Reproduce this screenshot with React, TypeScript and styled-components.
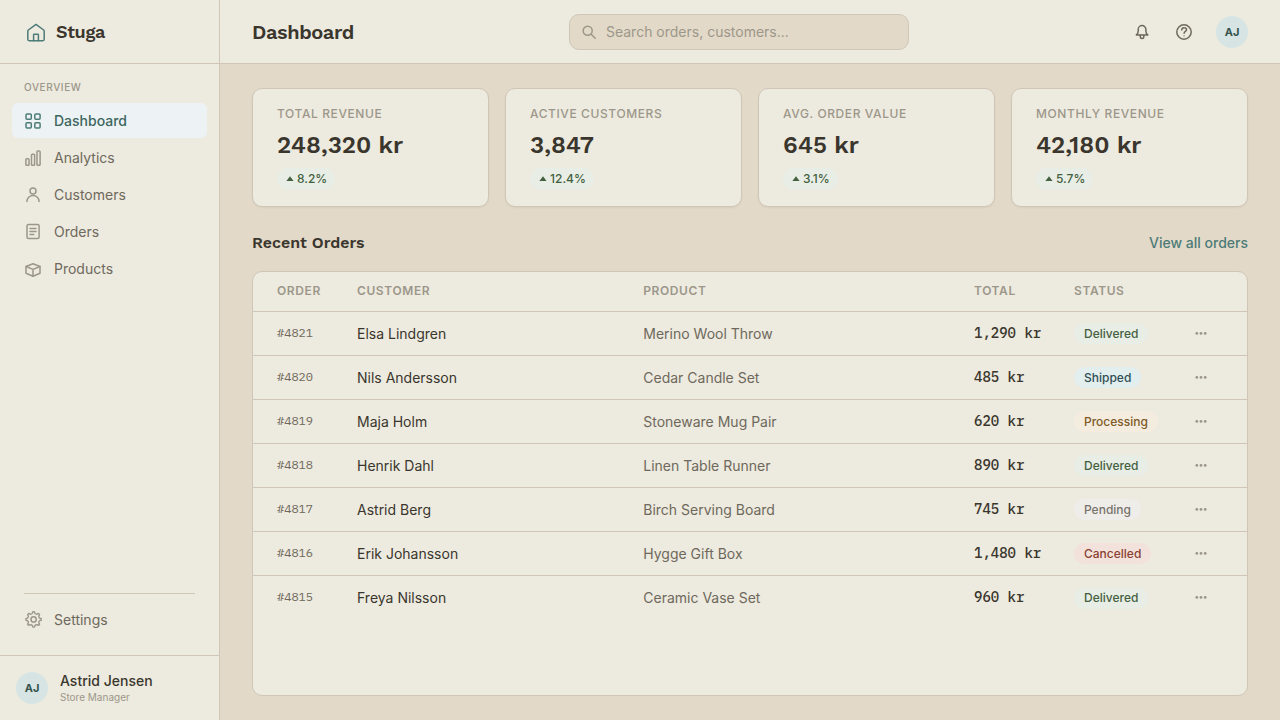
import React from "react";
import styled, { createGlobalStyle, css } from "styled-components";

const color = {
  sand: "#e3d9c8",
  surface: "#edeadf",
  border: "#d0c6b8",
  ink: "#3a362d",
  body: "#6e695c",
  muted: "#9c978a",
  teal: "#4d7c78",
  tealDark: "#3d665f",
  tealTint: "#edf3f4",
  avatar: "#d6e5e4",
};

const font = {
  body: '"Inter", "Liberation Sans", sans-serif',
  heading: '"Work Sans", "Inter", "Liberation Sans", sans-serif',
  mono: '"IBM Plex Mono", "Liberation Mono", monospace',
};

const GlobalStyle = createGlobalStyle`
  *, *::before, *::after { box-sizing: border-box; }
  body {
    margin: 0;
    background: ${color.sand};
    color: ${color.ink};
    font-family: ${font.body};
    font-size: 14px;
    line-height: 20px;
    -webkit-font-smoothing: antialiased;
  }
  button, input { font: inherit; color: inherit; }
  button { border: 0; padding: 0; background: none; cursor: pointer; }
  a { color: inherit; text-decoration: none; }
  h1, h2, p { margin: 0; }
`;

const Shell = styled.div`
  display: grid;
  grid-template-columns: 220px minmax(0, 1fr);
  min-height: 100vh;
`;

/* Sidebar */

const Sidebar = styled.aside`
  display: flex;
  flex-direction: column;
  background: ${color.surface};
  border-right: 1px solid ${color.border};
`;

const Brand = styled.div`
  display: flex;
  align-items: center;
  gap: 8px;
  height: 64px;
  padding: 0 24px;
  border-bottom: 1px solid ${color.border};
  font-family: ${font.heading};
  font-size: 18px;
  font-weight: 600;
  line-height: 21px;
  letter-spacing: -0.02em;
  svg { color: ${color.teal}; }
`;

const Nav = styled.nav`
  display: flex;
  flex: 1;
  flex-direction: column;
  gap: 2px;
  padding: 16px 12px 18px;
`;

const NavLabel = styled.p`
  padding: 0 12px 6px;
  color: ${color.muted};
  font-size: 10px;
  font-weight: 500;
  line-height: 15px;
  letter-spacing: 0.06em;
  text-transform: uppercase;
`;

const NavLink = styled.a<{ $active?: boolean }>`
  display: flex;
  align-items: center;
  gap: 12px;
  height: 35px;
  padding: 0 12px;
  border-radius: 6px;
  color: ${color.body};
  svg { color: ${color.muted}; }
  ${({ $active }) =>
    $active &&
    css`
      background: ${color.tealTint};
      color: ${color.tealDark};
      font-weight: 500;
      svg { color: ${color.teal}; }
    `}
`;

const NavDivider = styled.hr`
  width: calc(100% - 24px);
  margin: auto 12px 6px;
  border: 0;
  border-top: 1px solid ${color.border};
`;

const Profile = styled.div`
  display: flex;
  align-items: center;
  gap: 12px;
  height: 65px;
  padding: 0 16px;
  border-top: 1px solid ${color.border};
`;

const Avatar = styled.span`
  display: flex;
  align-items: center;
  justify-content: center;
  width: 32px;
  height: 32px;
  border-radius: 50%;
  background: ${color.avatar};
  color: #35524d;
  font-size: 11px;
  font-weight: 700;
`;

const ProfileName = styled.p`
  font-weight: 500;
  line-height: 18px;
`;

const ProfileRole = styled.p`
  color: ${color.muted};
  font-size: 10px;
  line-height: 14px;
`;

/* Top bar */

const Page = styled.div`
  display: flex;
  flex-direction: column;
  min-width: 0;
`;

const TopBar = styled.header`
  display: flex;
  align-items: center;
  justify-content: space-between;
  height: 64px;
  padding: 0 32px;
  background: ${color.surface};
  border-bottom: 1px solid ${color.border};
`;

const PageTitle = styled.h1`
  font-family: ${font.heading};
  font-size: 20px;
  font-weight: 600;
  line-height: 28px;
  letter-spacing: -0.02em;
`;

const SearchField = styled.label`
  display: flex;
  align-items: center;
  gap: 8px;
  width: 340px;
  height: 36px;
  padding: 0 12px;
  border: 1px solid ${color.border};
  border-radius: 10px;
  background: ${color.sand};
  color: ${color.muted};
`;

const SearchInput = styled.input`
  flex: 1;
  min-width: 0;
  padding: 0;
  border: 0;
  outline: 0;
  background: none;
  color: ${color.ink};
  &::placeholder { color: ${color.muted}; opacity: 1; }
`;

const TopActions = styled.div`
  display: flex;
  align-items: center;
  gap: 6px;
  ${Avatar} { margin-left: 8px; }
`;

const IconButton = styled.button`
  display: flex;
  align-items: center;
  justify-content: center;
  width: 36px;
  height: 36px;
  color: ${color.body};
`;

/* Content */

const Content = styled.main`
  display: flex;
  flex: 1;
  flex-direction: column;
  padding: 24px 32px;
`;

const StatGrid = styled.section`
  display: grid;
  grid-template-columns: repeat(4, minmax(0, 1fr));
  gap: 16px;
`;

const StatCard = styled.article`
  display: flex;
  flex-direction: column;
  align-items: flex-start;
  padding: 16px 24px;
  border: 1px solid ${color.border};
  border-radius: 10px;
  background: ${color.surface};
  box-shadow: 0 1px 2px rgba(58, 54, 45, 0.06);
`;

const StatLabel = styled.h2`
  color: ${color.muted};
  font-size: 12px;
  font-weight: 500;
  line-height: 17px;
  letter-spacing: 0.05em;
  text-transform: uppercase;
`;

const StatValue = styled.p`
  margin: 7px 0;
  font-family: ${font.heading};
  font-size: 24px;
  font-weight: 600;
  line-height: 32px;
`;

const Trend = styled.span`
  display: flex;
  align-items: center;
  gap: 2px;
  height: 22px;
  padding: 0 8px;
  border-radius: 11px;
  background: #e8eee6;
  color: #44603f;
  font-size: 12px;
  font-weight: 500;
`;

const SectionHead = styled.div`
  display: flex;
  align-items: center;
  justify-content: space-between;
  height: 64px;
  padding-top: 8px;
`;

const SectionTitle = styled.h2`
  font-family: ${font.heading};
  font-size: 16px;
  font-weight: 600;
`;

const TextLink = styled.a`
  color: ${color.teal};
  font-weight: 500;
`;

const Panel = styled.section`
  flex: 1;
  overflow: hidden;
  border: 1px solid ${color.border};
  border-radius: 10px;
  background: ${color.surface};
`;

const Table = styled.table`
  width: 100%;
  table-layout: fixed;
  border-spacing: 0;
`;

const HeadCell = styled.th<{ $width?: string }>`
  width: ${({ $width }) => $width ?? "auto"};
  height: 40px;
  padding: 0 0 1px;
  border-bottom: 1px solid ${color.border};
  color: ${color.muted};
  font-size: 12px;
  font-weight: 600;
  letter-spacing: 0.05em;
  text-align: left;
  text-transform: uppercase;
  &:first-child { padding-left: 24px; }
`;

const Row = styled.tr`
  &:not(:last-child) > td { border-bottom: 1px solid ${color.border}; }
`;

const Cell = styled.td`
  height: 44px;
  padding: 0;
`;

const NumberCell = styled(Cell)`
  padding: 0 0 2px 24px;
  color: ${color.body};
  font-family: ${font.mono};
  font-size: 12px;
`;

const ProductCell = styled(Cell)`
  color: ${color.body};
`;

const TotalCell = styled(Cell)`
  padding-bottom: 2px;
  font-family: ${font.mono};
  font-weight: 500;
`;

type Status = "Delivered" | "Shipped" | "Processing" | "Pending" | "Cancelled";

const statusColors: Record<Status, [string, string]> = {
  Delivered: ["#e8eee6", "#44603f"],
  Shipped: ["#e3eeee", "#2f4f55"],
  Processing: ["#f5ece0", "#7d5a26"],
  Pending: ["#efedea", "#77736b"],
  Cancelled: ["#f3e2dc", "#8a3f30"],
};

const StatusPill = styled.span<{ $status: Status }>`
  display: flex;
  align-items: center;
  width: fit-content;
  height: 21px;
  padding: 0 10px;
  border-radius: 11px;
  background: ${({ $status }) => statusColors[$status][0]};
  color: ${({ $status }) => statusColors[$status][1]};
  font-size: 12px;
  font-weight: 500;
`;

const RowMenu = styled.button`
  display: flex;
  align-items: center;
  justify-content: center;
  width: 14px;
  height: 20px;
  color: ${color.muted};
`;

/* Icons */

type IconProps = { size?: number; children: React.ReactNode };

const Icon = ({ size = 18, children }: IconProps) => (
  <svg
    width={size}
    height={size}
    viewBox={`0 0 ${size} ${size}`}
    fill="none"
    stroke="currentColor"
    strokeWidth="1.5"
    strokeLinecap="round"
    strokeLinejoin="round"
    aria-hidden="true"
  >
    {children}
  </svg>
);

const HomeIcon = () => (
  <Icon size={24}>
    <path d="M3.8 11.2a1.6 1.6 0 0 1 .55-1.2L12 4.4 19.65 10a1.6 1.6 0 0 1 .55 1.2v8.1a1.4 1.4 0 0 1-1.4 1.4H5.2a1.4 1.4 0 0 1-1.4-1.4z" />
    <path d="M9.6 20.7v-5.9a.5.5 0 0 1 .5-.5h3.8a.5.5 0 0 1 .5.5v5.9" />
  </Icon>
);

const GridIcon = () => (
  <Icon>
    {[2, 10.8].map((x) =>
      [2, 10.8].map((y) => (
        <rect key={`${x}-${y}`} x={x} y={y} width="5.3" height="5.3" rx="1" />
      ))
    )}
  </Icon>
);

const BarsIcon = () => (
  <Icon>
    <rect x="1.9" y="9.7" width="3.1" height="6.5" rx="0.8" />
    <rect x="7.5" y="5.3" width="3.1" height="10.9" rx="0.8" />
    <rect x="13" y="2" width="3.1" height="14.2" rx="0.8" />
  </Icon>
);

const PersonIcon = () => (
  <Icon>
    <circle cx="9" cy="5" r="3" />
    <path d="M2.9 15.6c0-3.5 2.7-6 6.1-6s6.1 2.5 6.1 6" />
  </Icon>
);

const DocumentIcon = () => (
  <Icon>
    <rect x="3" y="1.4" width="12.1" height="14.2" rx="1.5" />
    <path d="M6 5.5h6M6 8.5h6M6 11.5h3.8" />
  </Icon>
);

const BoxIcon = () => (
  <Icon>
    <path d="M2 6.5 9 3.8l7 2.7v6.8L9 16.3l-7-3z" />
    <path d="M2 6.5 9 9.4l7-2.9M9 9.4v6.9" />
  </Icon>
);

const GearIcon = () => {
  const teeth = 8;
  const at = (radius: number, turn: number) => {
    const angle = turn * Math.PI * 2 - Math.PI / 2;
    return `${(9.6 + radius * Math.cos(angle)).toFixed(2)} ${(8.4 + radius * Math.sin(angle)).toFixed(2)}`;
  };
  const segments = Array.from({ length: teeth }, (_, i) => {
    const t = i / teeth;
    return [
      `${i ? "L" : "M"}${at(7.6, t - 0.018)}`,
      `Q${at(7.9, t)} ${at(7.6, t + 0.018)}`,
      `L${at(6.2, t + 0.034)}`,
      `Q${at(5.5, t + 0.0625)} ${at(6.2, t + 0.091)}`,
    ].join("");
  });
  return (
    <Icon>
      <path d={`${segments.join("")}Z`} strokeWidth="1.4" />
      <circle cx="9.6" cy="8.4" r="2.6" />
    </Icon>
  );
};

const SearchIcon = () => (
  <Icon size={16}>
    <circle cx="5.7" cy="6.7" r="4.5" />
    <path d="m9 10 4.2 4.2" />
  </Icon>
);

const BellIcon = () => (
  <Icon>
    <path d="M3.3 11.9h11.5c-1.2-.9-1.9-1.8-1.9-3.6V6.4a3.8 3.8 0 0 0-7.7 0v1.9c0 1.800-.7 2.700-1.900 3.600z" />
    <path d="M7.300 12.200v1.600a1.750 1.750 0 0 0 3.500 0v-1.600" />
  </Icon>
);

const HelpIcon = () => (
  <Icon>
    <circle cx="9" cy="9" r="7.2" />
    <path d="M6.7 6.900A2.400 2.400 0 0 1 9.200 4.700c1.300 0 2.300.8 2.300 2 0 1.700-2.400 1.700-2.400 3.500" />
    <circle cx="9.1" cy="12.9" r="0.8" fill="currentColor" stroke="none" opacity="0.6" />
  </Icon>
);

const TriangleIcon = () => (
  <svg width="10" height="10" viewBox="0 0 10 10" fill="currentColor" aria-hidden="true">
    <path d="M5 2.3 8.6 7H1.4z" />
  </svg>
);

const DotsIcon = () => (
  <svg width="14" height="14" viewBox="0 0 14 14" fill="currentColor" aria-hidden="true">
    <circle cx="2.8" cy="6.4" r="1.4" />
    <circle cx="7" cy="6.4" r="1.4" />
    <circle cx="11.2" cy="6.4" r="1.4" />
  </svg>
);

/* Data */

const navItems = [
  { label: "Dashboard", icon: GridIcon, active: true },
  { label: "Analytics", icon: BarsIcon },
  { label: "Customers", icon: PersonIcon },
  { label: "Orders", icon: DocumentIcon },
  { label: "Products", icon: BoxIcon },
];

const stats = [
  { label: "Total Revenue", value: "248,320 kr", change: "8.2%" },
  { label: "Active Customers", value: "3,847", change: "12.4%" },
  { label: "Avg. Order Value", value: "645 kr", change: "3.1%" },
  { label: "Monthly Revenue", value: "42,180 kr", change: "5.7%" },
];

const orders: { id: string; customer: string; product: string; total: string; status: Status }[] = [
  { id: "#4821", customer: "Elsa Lindgren", product: "Merino Wool Throw", total: "1,290 kr", status: "Delivered" },
  { id: "#4820", customer: "Nils Andersson", product: "Cedar Candle Set", total: "485 kr", status: "Shipped" },
  { id: "#4819", customer: "Maja Holm", product: "Stoneware Mug Pair", total: "620 kr", status: "Processing" },
  { id: "#4818", customer: "Henrik Dahl", product: "Linen Table Runner", total: "890 kr", status: "Delivered" },
  { id: "#4817", customer: "Astrid Berg", product: "Birch Serving Board", total: "745 kr", status: "Pending" },
  { id: "#4816", customer: "Erik Johansson", product: "Hygge Gift Box", total: "1,480 kr", status: "Cancelled" },
  { id: "#4815", customer: "Freya Nilsson", product: "Ceramic Vase Set", total: "960 kr", status: "Delivered" },
];

export default function App() {
  return (
    <>
      <GlobalStyle />
      <Shell>
        <Sidebar>
          <Brand>
            <HomeIcon />
            Stuga
          </Brand>
          <Nav>
            <NavLabel>Overview</NavLabel>
            {navItems.map(({ label, icon: ItemIcon, active }) => (
              <NavLink key={label} href="#" $active={active} aria-current={active ? "page" : undefined}>
                <ItemIcon />
                {label}
              </NavLink>
            ))}
            <NavDivider />
            <NavLink href="#">
              <GearIcon />
              Settings
            </NavLink>
          </Nav>
          <Profile>
            <Avatar>AJ</Avatar>
            <div>
              <ProfileName>Astrid Jensen</ProfileName>
              <ProfileRole>Store Manager</ProfileRole>
            </div>
          </Profile>
        </Sidebar>
        <Page>
          <TopBar>
            <PageTitle>Dashboard</PageTitle>
            <SearchField>
              <SearchIcon />
              <SearchInput type="search" aria-label="Search" placeholder="Search orders, customers..." />
            </SearchField>
            <TopActions>
              <IconButton type="button" aria-label="Notifications">
                <BellIcon />
              </IconButton>
              <IconButton type="button" aria-label="Help">
                <HelpIcon />
              </IconButton>
              <Avatar>AJ</Avatar>
            </TopActions>
          </TopBar>
          <Content>
            <StatGrid>
              {stats.map((stat) => (
                <StatCard key={stat.label}>
                  <StatLabel>{stat.label}</StatLabel>
                  <StatValue>{stat.value}</StatValue>
                  <Trend>
                    <TriangleIcon />
                    {stat.change}
                  </Trend>
                </StatCard>
              ))}
            </StatGrid>
            <SectionHead>
              <SectionTitle>Recent Orders</SectionTitle>
              <TextLink href="#">View all orders</TextLink>
            </SectionHead>
            <Panel>
              <Table>
                <thead>
                  <tr>
                    <HeadCell $width="104px">Order</HeadCell>
                    <HeadCell $width="28.8%">Customer</HeadCell>
                    <HeadCell>Product</HeadCell>
                    <HeadCell $width="100px">Total</HeadCell>
                    <HeadCell $width="120px">Status</HeadCell>
                    <HeadCell $width="53px" aria-label="Actions" />
                  </tr>
                </thead>
                <tbody>
                  {orders.map((order) => (
                    <Row key={order.id}>
                      <NumberCell>{order.id}</NumberCell>
                      <Cell>{order.customer}</Cell>
                      <ProductCell>{order.product}</ProductCell>
                      <TotalCell>{order.total}</TotalCell>
                      <Cell>
                        <StatusPill $status={order.status}>{order.status}</StatusPill>
                      </Cell>
                      <Cell>
                        <RowMenu type="button" aria-label={`Actions for order ${order.id}`}>
                          <DotsIcon />
                        </RowMenu>
                      </Cell>
                    </Row>
                  ))}
                </tbody>
              </Table>
            </Panel>
          </Content>
        </Page>
      </Shell>
    </>
  );
}
